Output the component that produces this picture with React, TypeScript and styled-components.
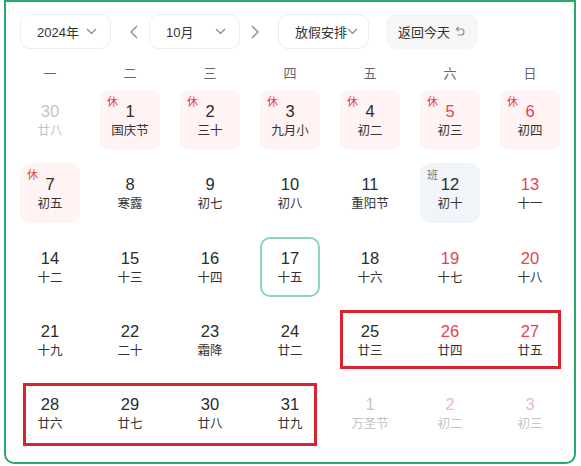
import React from "react";
import styled, { createGlobalStyle, css } from "styled-components";

const Global = createGlobalStyle`
  html, body { margin: 0; padding: 0; background: #fff; }
  body { font-family: "Liberation Sans", "Noto Sans CJK SC", sans-serif; color: #333; }
`;

const Frame = styled.div`
  position: relative;
  box-sizing: border-box;
  margin: 0 5px 0 4px;
  height: 464px;
  border: 2px solid #2aa86c;
  border-radius: 0 0 10px 10px;
  background: #fff;
`;

const Toolbar = styled.div`
  display: flex;
  align-items: center;
  padding: 12px 0 0 14px;
  height: 35px;
`;

const Select = styled.div<{ $w: number; $pr?: number }>`
  box-sizing: border-box;
  width: ${(p) => p.$w}px;
  height: 35px;
  border: 1px solid #ededed;
  border-radius: 10px;
  display: flex;
  align-items: center;
  justify-content: space-between;
  padding: 0 ${(p) => p.$pr ?? 13}px 0 16px;
  font-size: 13px;
  color: #333;
  background: #fff;
`;

const Arrow = styled.div<{ $ml: number; $mr: number }>`
  width: 16px;
  height: 35px;
  margin-left: ${(p) => p.$ml}px;
  margin-right: ${(p) => p.$mr}px;
  display: flex;
  align-items: center;
  justify-content: center;
`;

const TodayBtn = styled.div`
  box-sizing: border-box;
  margin-left: 17px;
  width: 92px;
  height: 35px;
  border-radius: 10px;
  background: #f6f6f6;
  display: flex;
  align-items: center;
  padding-left: 12px;
  gap: 5px;
  font-size: 13px;
  color: #333;
`;

const WeekHeader = styled.div`
  display: grid;
  grid-template-columns: repeat(7, 80px);
  margin: 12px 4px 0 4px;
  height: 22px;
  align-items: center;
`;

const WeekLabel = styled.div`
  text-align: center;
  font-size: 13px;
  color: #666;
`;

const Grid = styled.div`
  display: grid;
  grid-template-columns: repeat(7, 80px);
  grid-auto-rows: 60px;
  row-gap: 13.25px;
  margin: 7px 4px 0 4px;
  justify-items: center;
`;

type Kind = "normal" | "rest" | "work";

const Cell = styled.div<{ $kind: Kind; $today?: boolean }>`
  position: relative;
  box-sizing: border-box;
  width: 60px;
  height: 60px;
  border-radius: 10px;
  border: 2px solid transparent;
  padding-top: 8px;
  display: flex;
  flex-direction: column;
  align-items: center;
  ${(p) => p.$kind === "rest" && css`background: #fff3f3;`}
  ${(p) => p.$kind === "work" && css`background: #f1f4f8;`}
  ${(p) => p.$today && css`border-color: #8fd4b4;`}
`;

type Tone = "dark" | "red" | "grey" | "pink";
const toneColor: Record<Tone, string> = {
  dark: "#2b2b2b",
  red: "#e5424d",
  grey: "#c4c4c4",
  pink: "#f0b9bd",
};

const Num = styled.div<{ $tone: Tone }>`
  font-size: 16.5px;
  line-height: 22px;
  color: ${(p) => toneColor[p.$tone]};
`;

const Lunar = styled.div<{ $dim?: boolean }>`
  font-size: 12.5px;
  line-height: 19px;
  color: ${(p) => (p.$dim ? "#c4c4c4" : "#333")};
`;

const Tag = styled.span<{ $kind: Kind }>`
  position: absolute;
  left: 5px;
  top: 4px;
  font-size: 11px;
  line-height: 12px;
  color: ${(p) => (p.$kind === "rest" ? "#e5424d" : "#777")};
`;

const Mark = styled.div<{ $l: number; $t: number; $w: number; $h: number }>`
  position: absolute;
  box-sizing: border-box;
  left: ${(p) => p.$l}px;
  top: ${(p) => p.$t}px;
  width: ${(p) => p.$w}px;
  height: ${(p) => p.$h}px;
  border: 3px solid #d9232f;
  pointer-events: none;
`;

const Chevron = () => (
  <svg width="11" height="7" viewBox="0 0 11 7" fill="none">
    <path d="M1 1l4.5 4.5L10 1" stroke="#888" strokeWidth="1.2" />
  </svg>
);

const Side = ({ dir }: { dir: "l" | "r" }) => (
  <svg width="8" height="14" viewBox="0 0 8 14" fill="none">
    <path d={dir === "l" ? "M7 1L1 7l6 6" : "M1 1l6 6-6 6"} stroke="#888" strokeWidth="1.3" />
  </svg>
);

const Back = () => (
  <svg width="10" height="11" viewBox="0 0 10 11" fill="none">
    <path d="M3.5 1L1.5 3l2 2" stroke="#888" strokeWidth="1.1" />
    <path d="M1.5 3H6a3 3 0 0 1 0 6H3" stroke="#888" strokeWidth="1.1" />
  </svg>
);

type Day = {
  n: number;
  l: string;
  tone: Tone;
  kind?: Kind;
  today?: boolean;
  dimLunar?: boolean;
};

const d = (n: number, l: string, tone: Tone = "dark", kind: Kind = "normal", extra: Partial<Day> = {}): Day => ({
  n, l, tone, kind, ...extra,
});

const days: Day[] = [
  d(30, "廿八", "grey", "normal", { dimLunar: true }),
  d(1, "国庆节", "dark", "rest"),
  d(2, "三十", "dark", "rest"),
  d(3, "九月小", "dark", "rest"),
  d(4, "初二", "dark", "rest"),
  d(5, "初三", "red", "rest"),
  d(6, "初四", "red", "rest"),
  d(7, "初五", "dark", "rest"),
  d(8, "寒露"),
  d(9, "初七"),
  d(10, "初八"),
  d(11, "重阳节"),
  d(12, "初十", "dark", "work"),
  d(13, "十一", "red"),
  d(14, "十二"),
  d(15, "十三"),
  d(16, "十四"),
  d(17, "十五", "dark", "normal", { today: true }),
  d(18, "十六"),
  d(19, "十七", "red"),
  d(20, "十八", "red"),
  d(21, "十九"),
  d(22, "二十"),
  d(23, "霜降"),
  d(24, "廿二"),
  d(25, "廿三"),
  d(26, "廿四", "red"),
  d(27, "廿五", "red"),
  d(28, "廿六"),
  d(29, "廿七"),
  d(30, "廿八"),
  d(31, "廿九"),
  d(1, "万圣节", "grey", "normal", { dimLunar: true }),
  d(2, "初二", "pink", "normal", { dimLunar: true }),
  d(3, "初三", "pink", "normal", { dimLunar: true }),
];

const weeks = ["一", "二", "三", "四", "五", "六", "日"];

export default function App() {
  return (
    <>
      <Global />
      <Frame>
        <Toolbar>
          <Select $w={91}>
            <span>2024年</span>
            <Chevron />
          </Select>
          <Arrow $ml={15} $mr={7}>
            <Side dir="l" />
          </Arrow>
          <Select $w={91}>
            <span>10月</span>
            <Chevron />
          </Select>
          <Arrow $ml={7} $mr={15}>
            <Side dir="r" />
          </Arrow>
          <Select $w={91} $pr={10}>
            <span>放假安排</span>
            <Chevron />
          </Select>
          <TodayBtn>
            <span>返回今天</span>
            <Back />
          </TodayBtn>
        </Toolbar>
        <WeekHeader>
          {weeks.map((w) => (
            <WeekLabel key={w}>{w}</WeekLabel>
          ))}
        </WeekHeader>
        <Grid>
          {days.map((day, i) => {
            const kind = day.kind ?? "normal";
            return (
              <Cell key={i} $kind={kind} $today={day.today}>
                {kind === "rest" && <Tag $kind="rest">休</Tag>}
                {kind === "work" && <Tag $kind="work">班</Tag>}
                <Num $tone={day.tone}>{day.n}</Num>
                <Lunar $dim={day.dimLunar}>{day.l}</Lunar>
              </Cell>
            );
          })}
        </Grid>
        <Mark $l={334} $t={308} $w={221} $h={59} />
        <Mark $l={17} $t={381} $w={294} $h={63} />
      </Frame>
    </>
  );
}
